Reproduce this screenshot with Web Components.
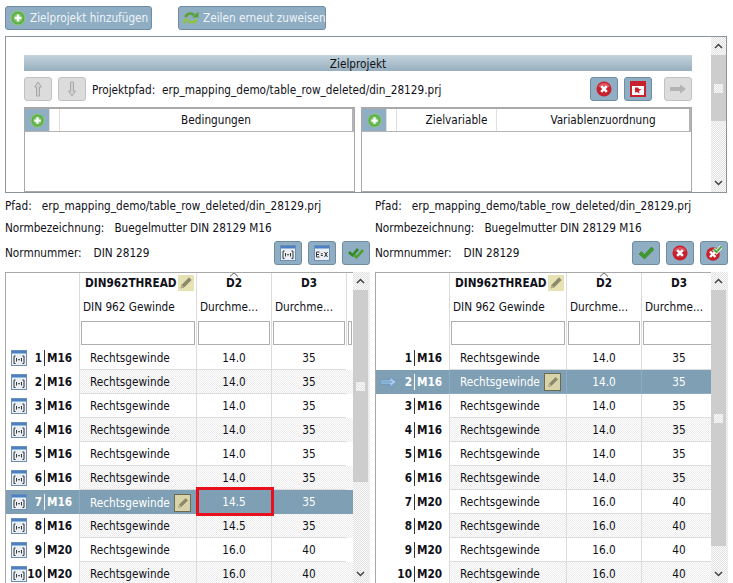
<!DOCTYPE html>
<html lang="de">
<head>
<meta charset="utf-8">
<title>Zielprojekt</title>
<style>
  html, body { margin: 0; height: 583px; overflow: hidden; background: #fff; }
  body { font: 11.7px "DejaVu Sans Condensed", "DejaVu Sans", sans-serif; font-stretch: condensed; color: #101018; }
  mapping-page { display: block; }
</style>
</head>
<body>
<mapping-page></mapping-page>

<script>
const ICONS = {
  plus: `<circle cx="8" cy="8" r="7" fill="#5cae48" stroke="#8ccb78"/><circle cx="8" cy="8" r="4.6" fill="#7cc268"/><path d="M8 4.6v6.8M4.6 8h6.8" stroke="#fff" stroke-width="2.4"/>`,
  refresh: `<path d="M2.500 7C3.500 3.500 8.500 2.500 11 5" fill="none" stroke="#5aa234" stroke-width="2.800"/><path d="M9 7.500h6.500V1.500z" fill="#5aa234"/><path d="M13.500 9C12.500 12.500 7.500 13.500 5 11" fill="none" stroke="#8cc34a" stroke-width="2.800"/><path d="M7 8.500H.5V14.500z" fill="#8cc34a"/>`,
  up: `<path d="M8 1l3.500 5H9.500v9h-3V6H4.500z" fill="#d0d0d0" stroke="#a8a8a8"/>`,
  down: `<path d="M8 15l3.500-5H9.500V1h-3v9H4.500z" fill="#d0d0d0" stroke="#a8a8a8"/>`,
  forward: `<path d="M0 6h10V3.500L16 8l-6 4.500V10H0z" fill="#b4b4b4"/>`,
  cross: `<circle cx="8" cy="8" r="7.500" fill="#c8202c"/><path d="M2 6a6.500 6.500 0 0 1 12 0z" fill="#e2535c"/><path d="M5.200 5.200l5.600 5.600M10.800 5.200l-5.600 5.600" stroke="#fff" stroke-width="2.600"/>`,
  crosscheck: `<circle cx="7" cy="9" r="6.800" fill="#c8202c"/><path d="M4 6.500l5.500 5.500M9.500 6.500L4 12" stroke="#fff" stroke-width="2.400"/><path d="M7.500 4l3 3L15.500 1.500" fill="none" stroke="#fff" stroke-width="3.800"/><path d="M7.500 4l3 3L15.500 1.500" fill="none" stroke="#4fae3c" stroke-width="2.200"/>`,
  redwin: `<rect width="16" height="16" fill="#c8202c"/><rect x="2" y="5" width="12" height="9" fill="#fff"/><path d="M5 6.500h3l1 1.500h2.500L9 10l.500 2.500L7 11l-2 .500z" fill="#c8202c"/>`,
  check: `<path d="M1 9l2.500-2.500L6.500 9.500 13.500 2 16 4.500 6.500 14z" fill="#3f9a2e" stroke="#2c7a20" stroke-width=".5"/>`,
  checks: `<path d="M0 8l2-2 2.500 2.500L9 3l2 2-6.500 7z" fill="#2f8a24"/><path d="M5 11l2-2 1.500 1.500L14 4l2 2-7.500 8z" fill="#4f9f30"/>`,
  pencil: `<path d="M3 13l.800-3L11 2.800 13.200 5 6 12.200z" fill="#8e8a6c" stroke="#78745a" stroke-width=".6"/><path d="M3 13l.800-3 2.200 2.200z" fill="#c4be96"/>`,
  pointer: `<path d="M0 6h9V3l6.500 5L9 13v-3H0z" fill="#a9cbe8" stroke="#5d8fc4" stroke-width=".7"/><path d="M1 8h10" stroke="#5d8fc4"/>`,
  binding: `<rect x=".5" y=".5" width="15" height="15" fill="#eaeff6" stroke="#6d8fb4"/><rect x="1" y="1" width="14" height="2.500" fill="#4a80c4"/><path d="M4.500 6h-1.500v7.500h1.500M11.500 6h1.500v7.500h-1.500" fill="none" stroke="#333"/><path d="M5.500 8v3.500M10.500 8v3.500M7 9.700h2" stroke="#333"/>`,
  formula: `<rect x=".5" y=".5" width="15" height="15" fill="#eaeff6" stroke="#6d8fb4"/><rect x="1" y="1" width="14" height="2.500" fill="#4a80c4"/><path d="M2.500 7h3M2.500 9.500h2.500M2.500 12h3M2.500 7v5M6.800 8.800h2M6.800 10.500h2M10.500 7l3 5M13.500 7l-3 5" fill="none" stroke="#333"/>`
};

class UiIcon extends HTMLElement {
  connectedCallback () {
    const size = this.getAttribute('size') || 16
    this.attachShadow({ mode: 'open' }).innerHTML = `
    <style>
      :host { display: inline-flex; flex: none; }
    </style>
    <svg width="${size}" height="${size}" viewBox="0 0 16 16">${ICONS[this.getAttribute('name')]}</svg>`
  }
}
customElements.define('ui-icon', UiIcon)

class ToolButton extends HTMLElement {
  connectedCallback () {
    const icon = this.getAttribute('icon')
    const size = this.getAttribute('size') || 16
    this.attachShadow({ mode: 'open' }).innerHTML = `
    <style>
      :host {
        align-items: center;
        background: #8fadc3;
        border: 1px solid #6f8ca3;
        border-radius: 3px;
        box-sizing: border-box;
        color: #eef4f8;
        display: inline-flex;
        flex: none;
        gap: 4px;
        height: 24px;
        justify-content: center;
        min-width: 28px;
        white-space: nowrap;
      }
      :host([disabled]) { background: #dcdcdc; border-color: #c2c2c2; }
      :host([wide]) { justify-content: flex-start; padding-left: 4px; }
    </style>
    <ui-icon name="${icon}" size="${size}"></ui-icon><slot></slot>`
  }
}
customElements.define('tool-button', ToolButton)

class InnerTable extends HTMLElement {
  connectedCallback () {
    const cols = JSON.parse(this.getAttribute('cols'))
    this.attachShadow({ mode: 'open' }).innerHTML = `
    <style>
      :host {
        border: 1px solid #a9a9a9;
        border-top-width: 2px;
        box-sizing: border-box;
        display: block;
        flex: 1;
        height: 85px;
        min-width: 0;
      }
      .head {
        border-bottom: 1px solid #b4b4b4;
        border-right: 2px solid #b4b4b4;
        display: grid;
        grid-template-columns: ${this.getAttribute('template')};
        height: 22px;
      }
      .add {
        align-items: center;
        background: #8fadc3;
        display: flex;
        justify-content: center;
      }
      .cell {
        align-items: center;
        border-left: 1px solid #dfdfdf;
        display: flex;
        justify-content: center;
        padding-left: 20px;
      }
      .cell:empty { padding-left: 0; }
    </style>
    <div class="head">
      <div class="add"><ui-icon name="plus" size="15"></ui-icon></div>
      ${cols.map(c => `<div class="cell">${c}</div>`).join('')}
    </div>`
  }
}
customElements.define('inner-table', InnerTable)

class ScrollBar extends HTMLElement {
  connectedCallback () {
    const thumb = this.getAttribute('thumb')
    this.attachShadow({ mode: 'open' }).innerHTML = `
    <style>
      :host {
        background: repeating-conic-gradient(#e2e2e2 0 25%, #fafafa 0 50%) 0 0 / 2px 2px;
        box-sizing: border-box;
        display: flex;
        flex: none;
        flex-direction: column;
        padding-right: ${this.getAttribute('gutter') || 0}px;
        width: ${15 + +(this.getAttribute('gutter') || 0)}px;
      }
      .arrow { align-items: center; display: flex; flex: none; height: 18px; justify-content: center; }
      .thumb {
        align-items: center;
        background: #cdcdcd;
        display: flex;
        flex: none;
        height: ${thumb}px;
        justify-content: center;
      }
      .grip { background: repeating-conic-gradient(#e2e2e2 0 25%, #fafafa 0 50%) 0 0 / 2px 2px; height: 9px; width: 9px; }
      .down { margin-top: auto; }
    </style>
    <div class="arrow"><svg width="9" height="6" viewBox="0 0 9 6"><path d="M1 5l3.500-3.500L8 5" fill="none" stroke="#444" stroke-width="1.500"/></svg></div>
    <div class="thumb"><div class="grip"></div></div>
    <div class="arrow down"><svg width="9" height="6" viewBox="0 0 9 6"><path d="M1 1l3.500 3.500L8 1" fill="none" stroke="#444" stroke-width="1.500"/></svg></div>`
  }
}
customElements.define('scroll-bar', ScrollBar)

class TargetPanel extends HTMLElement {
  connectedCallback () {
    this.attachShadow({ mode: 'open' }).innerHTML = `
    <style>
      :host {
        border: 1px solid #8a959e;
        box-sizing: border-box;
        display: flex;
        height: 157px;
        margin: 6px 0 0 5px;
        overflow: hidden;
        width: 722px;
      }
      .body { flex: 1; min-width: 0; padding: 18px 19px 0 18px; }
      .title {
        background: linear-gradient(#c4d3dc, #98afbf);
        height: 15px;
        line-height: 16px;
        padding-top: 1px;
        text-align: center;
      }
      .path { align-items: center; display: flex; gap: 6px; margin-top: 6px; }
      .path span { padding-top: 2px; white-space: pre; }
      .spacer { flex: 1; }
      .tables { display: flex; gap: 6px; margin-top: 6px; }
    </style>
    <div class="body">
      <div class="title">Zielprojekt</div>
      <div class="path">
        <tool-button icon="up" disabled></tool-button>
        <tool-button icon="down" disabled></tool-button>
        <span>Projektpfad:  erp_mapping_demo/table_row_deleted/din_28129.prj</span>
        <div class="spacer"></div>
        <tool-button icon="cross"></tool-button>
        <tool-button icon="redwin"></tool-button>
        <tool-button icon="forward" disabled style="margin-left:6px"></tool-button>
      </div>
      <div class="tables">
        <inner-table template="24px 10px 1fr" cols='["","Bedingungen"]'></inner-table>
        <inner-table template="24px 10px 100px 1fr" cols='["","Zielvariable","Variablenzuordnung"]'></inner-table>
      </div>
    </div>
    <scroll-bar thumb="66"></scroll-bar>`
  }
}
customElements.define('target-panel', TargetPanel)

class NormInfo extends HTMLElement {
  connectedCallback () {
    this.attachShadow({ mode: 'open' }).innerHTML = `
    <style>
      :host { display: block; min-width: 0; }
      .line { display: flex; gap: 10px; white-space: nowrap; }
      .one { height: 17px; line-height: 17px; margin-top: 5px; }
      .two { height: 17px; line-height: 17px; margin-top: 5px; }
      .three { align-items: center; gap: 12px; height: 24px; margin-top: 4px; }
      .acts { display: flex; gap: 6px; margin-left: auto; }
    </style>
    <div class="line one"><span>Pfad:</span><span>erp_mapping_demo/table_row_deleted/din_28129.prj</span></div>
    <div class="line two"><span>Normbezeichnung:</span><span>Buegelmutter DIN 28129 M16</span></div>
    <div class="line three"><span>Normnummer:</span><span>DIN 28129</span><div class="acts"><slot></slot></div></div>`
  }
}
customElements.define('norm-info', NormInfo)

class NormGrid extends HTMLElement {
  connectedCallback () {
    const rows = JSON.parse(this.getAttribute('rows'))
    const selected = +this.getAttribute('selected')
    const marked = +this.getAttribute('marked')
    const showIcons = this.hasAttribute('icons')
    this.attachShadow({ mode: 'open' }).innerHTML = `
    <style>
      :host {
        display: flex;
        height: 311px;
        overflow: hidden;
      }
      .table {
        border-left: 1px solid #a9a9a9;
        border-top: 1px solid #a9a9a9;
        flex: 1;
        min-width: 0;
        overflow: hidden;
      }
      .r {
        display: grid;
        grid-template-columns: 73px 117px 75px 75px 1fr;
      }
      .head1 { height: 22px; }
      .head2 { height: 25px; }
      .head3 { height: 26px; }
      .h { border-left: 1px solid #dcdcdc; box-sizing: border-box; overflow: hidden; white-space: nowrap; }
      .h:first-child { border-left: 0; }
      .name { align-items: center; display: flex; font-weight: 700; height: 20px; justify-content: center; position: relative; }
      .name.thread { justify-content: flex-start; padding-left: 5px; }
      .name .pen { background: #e6e2b4; display: flex; height: 16px; margin-left: 1px; }
      .name .caret { left: 50%; margin-left: -5px; position: absolute; top: -1px; }
      .desc { line-height: 25px; padding-left: 3px; }
      .filter { border: 1px solid #aeaeae; box-sizing: border-box; display: block; height: 24px; margin: 1px 0 0 1px; width: calc(100% - 2px); }
      .row { height: 24px; line-height: 25px; }
      .row:nth-child(even) .dither { background: repeating-conic-gradient(#ebebeb 0 25%, #fff 0 50%) 0 0 / 2px 2px; }
      .c { border-bottom: 1px solid #dcdcdc; border-left: 1px solid #dcdcdc; box-sizing: border-box; overflow: hidden; text-align: center; white-space: nowrap; }
      .c.text { align-items: center; display: flex; padding: 1px 0 0 10px; text-align: left; }
      .rh { align-items: center; display: flex; font-weight: 700; height: 24px; }
      .rh ui-icon { margin-left: 5px; }
      .rh .num { margin-left: auto; padding-right: 2px; }
      .rh .m { border-left: 1px solid #333; height: 16px; line-height: 17px; padding: 0 8px 0 2px; width: 24px; }
      .row.sel { color: #fff; }
      .row.sel > div, .row.sel .dither { background: #7f9fb4 !important; border-color: #8fadc0; }
      .row.sel .m { border-color: #fff; }
      .pen-sel { align-items: center; background: #d8d3a8; border: 1px solid #6b6b50; box-sizing: border-box; display: flex; height: 18px; justify-content: center; margin-left: auto; margin-right: 5px; width: 17px; }
      .c.mark { overflow: visible; position: relative; z-index: 2; }
      .c.mark::after { border: 3px solid #e8101c; content: ""; inset: -3px -3px -1px -1px; position: absolute; }
      .fill { border: 0 !important; }
    </style>
    <div class="table">
      <div class="r head1">
        <div class="h"></div>
        <div class="h"><div class="name thread">DIN962THREAD<span class="pen"><ui-icon name="pencil" size="16"></ui-icon></span></div></div>
        <div class="h"><div class="name"><svg class="caret" width="10" height="5" viewBox="0 0 10 5"><path d="M1 4.500L5 .8 9 4.500" fill="none" stroke="#555"/></svg>D2</div></div>
        <div class="h"><div class="name">D3</div></div>
        <div class="h"></div>
      </div>
      <div class="r head2">
        <div class="h"></div>
        <div class="h desc">DIN 962 Gewinde</div>
        <div class="h desc">Durchme...</div>
        <div class="h desc">Durchme...</div>
        <div class="h"></div>
      </div>
      <div class="r head3">
        <div class="h"></div>
        <div class="h"><span class="filter"></span></div>
        <div class="h"><span class="filter"></span></div>
        <div class="h"><span class="filter"></span></div>
        <div class="h"><span class="filter"></span></div>
      </div>
      <div class="rows">
      ${rows.map((row, i) => `
        <div class="r row ${i + 1 === selected ? 'sel' : ''}">
          <div class="rh">
            ${showIcons ? '<ui-icon name="binding" size="16"></ui-icon>' : (i + 1 === selected ? '<ui-icon name="pointer" size="16"></ui-icon>' : '')}
            <span class="num">${i + 1}</span><span class="m">${row[0]}</span>
          </div>
          <div class="c text dither">Rechtsgewinde${i + 1 === selected ? '<span class="pen-sel"><ui-icon name="pencil" size="14"></ui-icon></span>' : ''}</div>
          <div class="c dither ${i + 1 === marked ? 'mark' : ''}">${row[1]}</div>
          <div class="c dither">${row[2]}</div>
          <div class="c dither fill"></div>
        </div>`).join('')}
      </div>
    </div>
    <scroll-bar gutter="2" thumb="${this.getAttribute('thumb')}"></scroll-bar>`
  }
}
customElements.define('norm-grid', NormGrid)

class MappingPage extends HTMLElement {
  connectedCallback () {
    const left = [['M16','14.0',35],['M16','14.0',35],['M16','14.0',35],['M16','14.0',35],['M16','14.0',35],['M16','14.0',35],['M16','14.5',35],['M16','14.5',35],['M20','16.0',40],['M20','16.0',40]]
    const right = [['M16','14.0',35],['M16','14.0',35],['M16','14.0',35],['M16','14.0',35],['M16','14.0',35],['M16','14.0',35],['M20','16.0',40],['M20','16.0',40],['M20','16.0',40],['M20','16.0',40]]
    this.attachShadow({ mode: 'open' }).innerHTML = `
    <style>
      :host { display: block; }
      .top { display: flex; gap: 26px; padding: 6px 0 0 5px; }
      .info { display: grid; gap: 5px; grid-template-columns: 365px 353px; padding-left: 5px; }
      .grids { display: grid; gap: 5px; grid-template-columns: 365px 353px; margin-top: 7px; padding-left: 5px; }
    </style>
    <div class="top">
      <tool-button icon="plus" wide style="width:147px">Zielprojekt hinzufügen</tool-button>
      <tool-button icon="refresh" wide style="width:148px">Zeilen erneut zuweisen</tool-button>
    </div>
    <target-panel></target-panel>
    <div class="info">
      <norm-info>
        <tool-button icon="binding" size="16"></tool-button>
        <tool-button icon="formula" size="16"></tool-button>
        <tool-button icon="checks"></tool-button>
      </norm-info>
      <norm-info>
        <tool-button icon="check"></tool-button>
        <tool-button icon="cross"></tool-button>
        <tool-button icon="crosscheck"></tool-button>
      </norm-info>
    </div>
    <div class="grids">
      <norm-grid icons selected="7" marked="7" thumb="192" rows='${JSON.stringify(left)}'></norm-grid>
      <norm-grid selected="2" thumb="256" rows='${JSON.stringify(right)}'></norm-grid>
    </div>`
  }
}
customElements.define('mapping-page', MappingPage)
</script>
</body>
</html>
